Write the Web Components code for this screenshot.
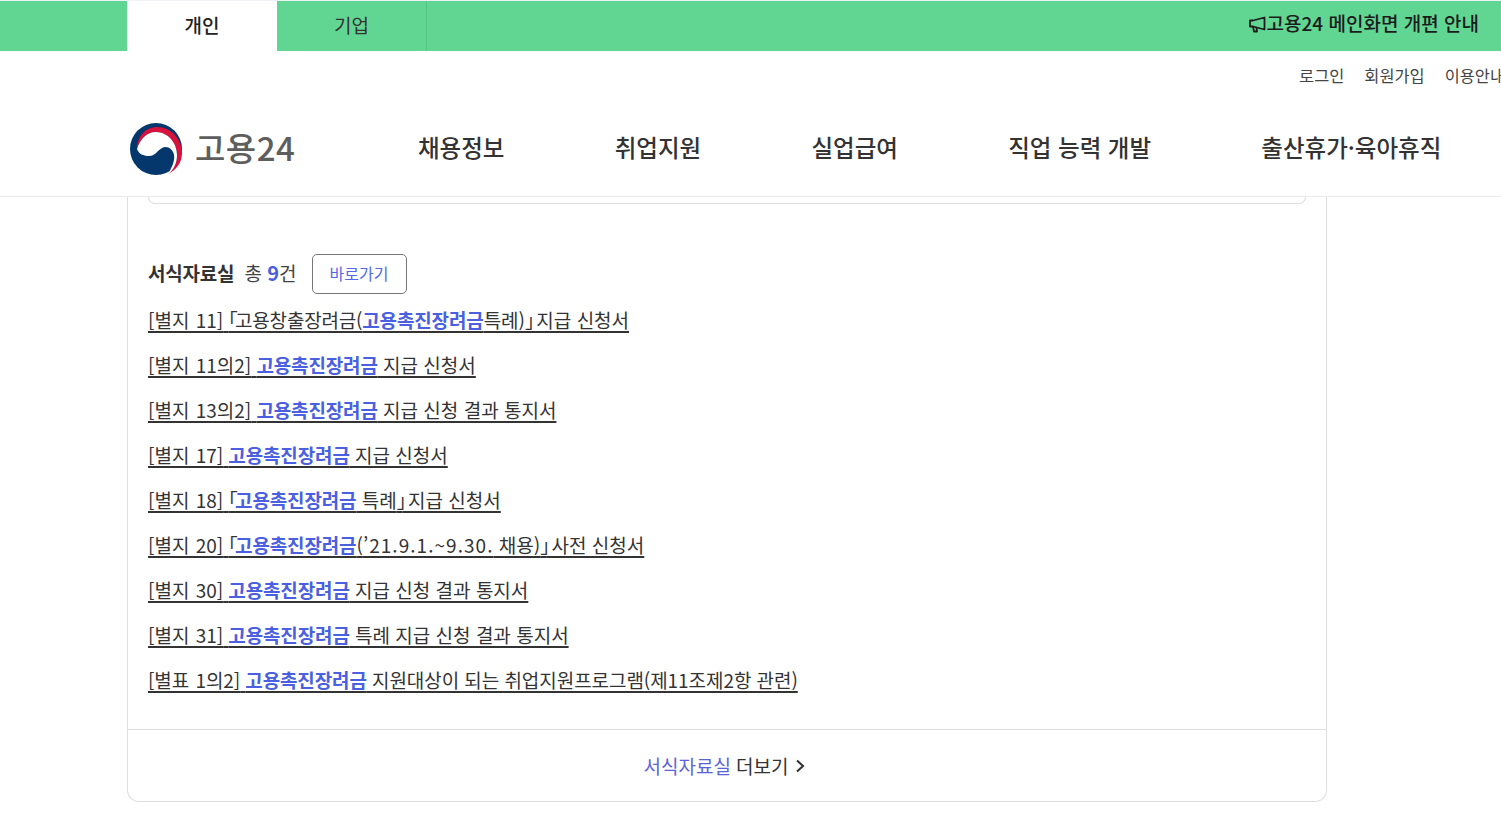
<!DOCTYPE html>
<html lang="ko">
<head>
<meta charset="UTF-8" />
<title>고용24</title>
<style>
    html, body { margin: 0; padding: 0; background: #fff; overflow: hidden; }
    body { font-family: "Noto Sans CJK KR", "Noto Sans", sans-serif; color: #333; }
</style>
</head>
<body>
    <top-bar></top-bar>
    <site-header></site-header>
    <form-card count="9">
        <form-row num="[별지 11]" before=" 「고용창출장려금(" after="특례)」 지급 신청서"></form-row>
        <form-row num="[별지 11의2]" before=" " after=" 지급 신청서"></form-row>
        <form-row num="[별지 13의2]" before=" " after=" 지급 신청 결과 통지서"></form-row>
        <form-row num="[별지 17]" before=" " after=" 지급 신청서"></form-row>
        <form-row num="[별지 18]" before=" 「" after=" 특례」 지급 신청서"></form-row>
        <form-row num="[별지 20]" before=" 「" after="(’21.9.1.~9.30. 채용)」 사전 신청서"></form-row>
        <form-row num="[별지 30]" before=" " after=" 지급 신청 결과 통지서"></form-row>
        <form-row num="[별지 31]" before=" " after=" 특례 지급 신청 결과 통지서"></form-row>
        <form-row num="[별표 1의2]" before=" " after=" 지원대상이 되는 취업지원프로그램(제11조제2항 관련)" style="letter-spacing: -0.06px"></form-row>
    </form-card>

    <template id="top-bar-template">
        <style>
            :host { display: block; border-top: 1px solid #eef1f6; }
            .bar { display: flex; height: 50px; background: #61d693; padding-left: 127px; padding-right: 22px; align-items: stretch; }
            .tab { width: 150px; box-sizing: border-box; display: flex; align-items: center; justify-content: center; font-size: 19px; color: #333; padding-bottom: 3px; }
            .tab.on { background: #fff; font-weight: 500; color: #222; }
            .tab.off { border-right: 1px solid #56c585; }
            .notice { margin-left: auto; display: flex; align-items: center; font-size: 19px; font-weight: 500; color: #1c1c1c; padding-bottom: 8px; }
            svg { width: 19px; height: 17px; margin-top: 5px; }
        </style>
        <div class="bar">
            <div class="tab on">개인</div>
            <div class="tab off">기업</div>
            <div class="notice">
                <svg viewBox="0 0 19 17" fill="none" stroke="#1c1c1c" stroke-width="1.8" stroke-linejoin="round"><path d="M16.5 1.5 L5 4.5 H2 V10.5 H5 L16.5 13.5 Z"/><path d="M5 10.5 L6 15.5 H9 L8.5 11.5"/></svg>
                <span>고용24 메인화면 개편 안내</span>
            </div>
        </div>
    </template>

    <template id="site-header-template">
        <style>
            :host { display: block; height: 146px; box-sizing: border-box; border-bottom: 1px solid #eaeaea; }
            .util { display: flex; justify-content: flex-end; gap: 20px; height: 48px; align-items: center; font-size: 16.4px; color: #444; margin-right: -4px; white-space: nowrap; }
            .main { display: flex; align-items: center; padding-left: 129px; height: 96px; }
            .logo { display: flex; align-items: center; width: 289px; flex: none; }
            svg { width: 54px; height: 52px; display: block; flex: none; margin-top: 3px; }
            .word { font-size: 33px; font-weight: 500; color: #5e5e5e; margin-left: 12px; letter-spacing: 0.5px; }
            nav { display: flex; font-size: 23.5px; font-weight: 500; color: #333; gap: 110.25px; white-space: nowrap; }
        </style>
        <div class="util"><span>로그인</span><span>회원가입</span><span>이용안내</span></div>
        <div class="main">
            <div class="logo">
                <svg viewBox="0 0 54 52">
                    <circle cx="27" cy="26" r="26" fill="#04376c"/>
                    <path d="M8 26 C8 13 17 4 28 4 C42 4 53 16 53 30 C53 40 47 47 39 51 C45 46 48 40 48 32 C48 20 39 9 27 9 C18 9 11 16 8 26Z" fill="#d8123c"/>
                    <path d="M8 26 C11 16 18 9 27 9 C39 9 48 20 48 32 C48 40 45 46 39 51 C43 44 46 38 45 32 C44 26 38 22 33 25 C28 28 26 33 20 33 C14 33 10 31 8 26Z" fill="#fff"/>
                </svg>
                <span class="word">고용24</span>
            </div>
            <nav><span>채용정보</span><span>취업지원</span><span>실업급여</span><span>직업 능력 개발</span><span>출산휴가·육아휴직</span></nav>
        </div>
    </template>

    <template id="form-card-template">
        <style>
            :host { display: block; width: 1200px; margin-left: 127px; box-sizing: border-box; border: 1px solid #dedede; border-top: 0; border-radius: 0 0 12px 12px; }
            .stub { margin: 0 20px; height: 6px; border: 1px solid #dedede; border-top: 0; border-radius: 0 0 12px 12px; }
            .body { padding: 50px 20px 27px; }
            .head { display: flex; align-items: center; height: 40px; margin-bottom: 3px; }
            h3 { margin: 0 0 4px; font-size: 19px; font-weight: 700; color: #333; letter-spacing: -0.2px; }
            .total { margin-left: 10px; font-size: 19px; color: #444; margin-bottom: 4px; }
            .total b { color: #4a60e0; font-weight: 700; font-size: 20px; }
            .go { margin-left: 15px; width: 95px; height: 40px; box-sizing: border-box; border: 1px solid #767676; border-radius: 5px; display: flex; align-items: center; justify-content: center; font-size: 16px; color: #5468e8; padding-bottom: 2px; }
            .foot { border-top: 1px solid #dedede; height: 71px; display: flex; align-items: center; justify-content: center; font-size: 19px; color: #333; padding-right: 5px; }
            .foot em { font-style: normal; color: #5a64d8; margin-right: 5px; }
            .foot svg { width: 10px; height: 14px; margin-left: 7px; }
        </style>
        <div class="stub"></div>
        <div class="body">
            <div class="head">
                <h3>서식자료실</h3>
                <span class="total">총 <b>9</b>건</span>
                <span class="go">바로가기</span>
            </div>
            <slot></slot>
        </div>
        <div class="foot">
            <em>서식자료실</em><span>더보기</span>
            <svg viewBox="0 0 10 14" fill="none" stroke="#333" stroke-width="2.1"><path d="M2 1.5 L8 7 L2 12.5"/></svg>
        </div>
    </template>

    <template id="form-row-template">
        <style>
            :host { display: block; height: 45px; line-height: 45px; font-size: 19px; color: #333; }
            a { color: inherit; white-space: pre; font-feature-settings: "halt"; text-decoration: underline; text-decoration-thickness: 2px; text-underline-offset: 3px; }
            #num { word-spacing: 1px; }
            #before { letter-spacing: -0.2px; }
            strong { color: #4a60e0; font-weight: 700; letter-spacing: -0.14px; }
            .open { letter-spacing: -2.8px; }
            .close { letter-spacing: -3.5px; }
            .date { letter-spacing: 1.03px; }
        </style>
        <a><span id="num"></span><span id="before"></span><strong>고용촉진장려금</strong><span id="after"></span></a>
    </template>

    <script>
        // Base class: clones the template named after the tag into an open shadow root
        class ShadowComponent extends HTMLElement {
            constructor() {
                super();
                this.attachShadow({ mode: 'open' });
                const template = document.getElementById(this.localName + '-template');
                this.shadowRoot.appendChild(template.content.cloneNode(true));
            }
        }

        class TopBar extends ShadowComponent {}
        class SiteHeader extends ShadowComponent {}
        class FormCard extends ShadowComponent {}

        class FormRow extends ShadowComponent {
            connectedCallback() {
                for (const key of ['num', 'before', 'after']) {
                    // corner brackets and the date run are narrower / wider than the font gives
                    this.shadowRoot.getElementById(key).innerHTML = this.getAttribute(key)
                        .replace('「', '<span class="open">「</span>')
                        .replace('」', '<span class="close">」</span>')
                        .replace('’21.9.1.~9.30.', '<span class="date">’21.9.1.~9.30.</span>');
                }
            }
        }

        customElements.define('top-bar', TopBar);
        customElements.define('site-header', SiteHeader);
        customElements.define('form-card', FormCard);
        customElements.define('form-row', FormRow);
    </script>
</body>
</html>
